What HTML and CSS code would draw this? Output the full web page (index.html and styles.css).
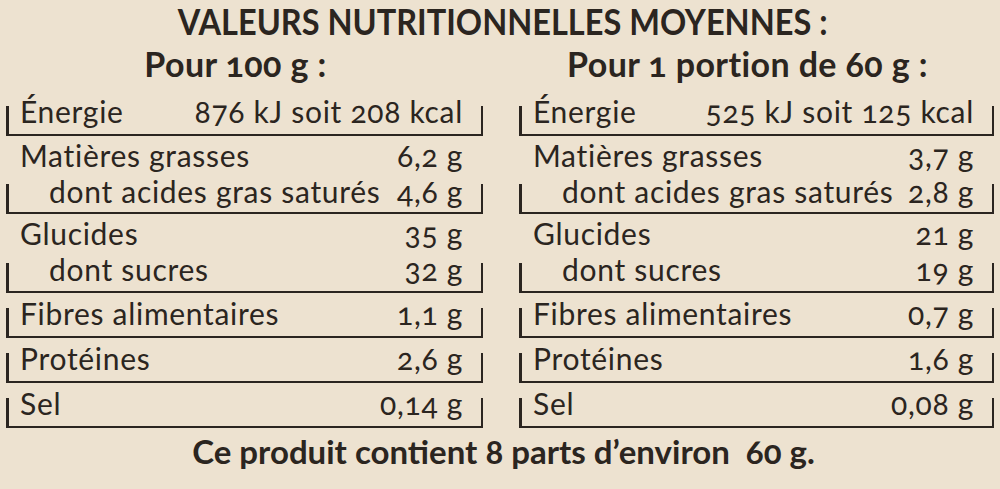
FILE: index.html
```html
<!DOCTYPE html>
<html lang="fr">
<head>
<meta charset="utf-8">
<title>Valeurs nutritionnelles</title>
<link rel="stylesheet" href="styles.css">
</head>
<body>
<div class="label">
  <h1 class="title"><span class="title-text">VALEURS NUTRITIONNELLES MOYENNES :</span></h1>
  <div class="cols">
    <section class="col">
      <h2 class="col-head">Pour 100 g :</h2>
      <div class="group"><div class="row"><span>Énergie</span><span>876 kJ soit 208 kcal</span></div></div>
      <div class="group double">
        <div class="row"><span>Matières grasses</span><span>6,2 g</span></div>
        <div class="row sub"><span>dont acides gras saturés</span><span>4,6 g</span></div>
      </div>
      <div class="group double">
        <div class="row"><span>Glucides</span><span>35 g</span></div>
        <div class="row sub"><span>dont sucres</span><span>32 g</span></div>
      </div>
      <div class="group"><div class="row"><span>Fibres alimentaires</span><span>1,1 g</span></div></div>
      <div class="group"><div class="row"><span>Protéines</span><span>2,6 g</span></div></div>
      <div class="group"><div class="row"><span>Sel</span><span>0,14 g</span></div></div>
    </section>
    <section class="col">
      <h2 class="col-head">Pour 1 portion de 60 g :</h2>
      <div class="group"><div class="row"><span>Énergie</span><span>525 kJ soit 125 kcal</span></div></div>
      <div class="group double">
        <div class="row"><span>Matières grasses</span><span>3,7 g</span></div>
        <div class="row sub"><span>dont acides gras saturés</span><span>2,8 g</span></div>
      </div>
      <div class="group double">
        <div class="row"><span>Glucides</span><span>21 g</span></div>
        <div class="row sub"><span>dont sucres</span><span>19 g</span></div>
      </div>
      <div class="group"><div class="row"><span>Fibres alimentaires</span><span>0,7 g</span></div></div>
      <div class="group"><div class="row"><span>Protéines</span><span>1,6 g</span></div></div>
      <div class="group"><div class="row"><span>Sel</span><span>0,08 g</span></div></div>
    </section>
  </div>
  <p class="foot">Ce produit contient 8 parts d’environ&nbsp; 60 g.</p>
</div>
</body>
</html>
```
FILE: styles.css
```css
html, body {
  margin: 0;
  padding: 0;
  background: #ede2d0;
}
body {
  width: 1000px;
  height: 489px;
  overflow: hidden;
  color: #2b2520;
  font-family: Lato, "Open Sans", sans-serif;
  font-variant-numeric: oldstyle-nums;
}
.label {
  display: flex;
  flex-direction: column;
}
.title {
  margin: 0;
  height: 42px;
  padding-left: 6px;
  font-size: 37px;
  line-height: 42px;
  font-weight: 700;
  text-align: center;
  white-space: nowrap;
}
.title-text {
  display: inline-block;
  transform: scaleX(0.879);
  transform-origin: center;
}
.cols {
  display: grid;
  grid-template-columns: 477px 475px;
  column-gap: 36px;
  padding: 0 6px;
}
.col-head {
  margin: 0 0 4.75px;
  padding-right: 18px;
  font-size: 34px;
  line-height: 44px;
  letter-spacing: 0.4px;
  font-weight: 700;
  text-align: center;
}
.group {
  position: relative;
  border-bottom: 2.5px solid #2b2520;
  padding: 2.5px 20px 4.5px 14px;
}
.group.double {
  padding-top: 1px;
  padding-bottom: 3.5px;
}
.group::before,
.group::after {
  content: "";
  position: absolute;
  bottom: 0;
  width: 2.5px;
  height: 28px;
  background: #2b2520;
}
.group::before { left: 0; }
.group::after { right: 0; }
.row {
  display: flex;
  justify-content: space-between;
  font-size: 30px;
  line-height: 36px;
  letter-spacing: 0.7px;
}
.row.sub span:first-child {
  padding-left: 29px;
}
.foot {
  margin: 3.5px 0 0;
  padding-left: 7px;
  font-size: 33px;
  line-height: 40px;
  font-weight: 700;
  text-align: center;
}
```
